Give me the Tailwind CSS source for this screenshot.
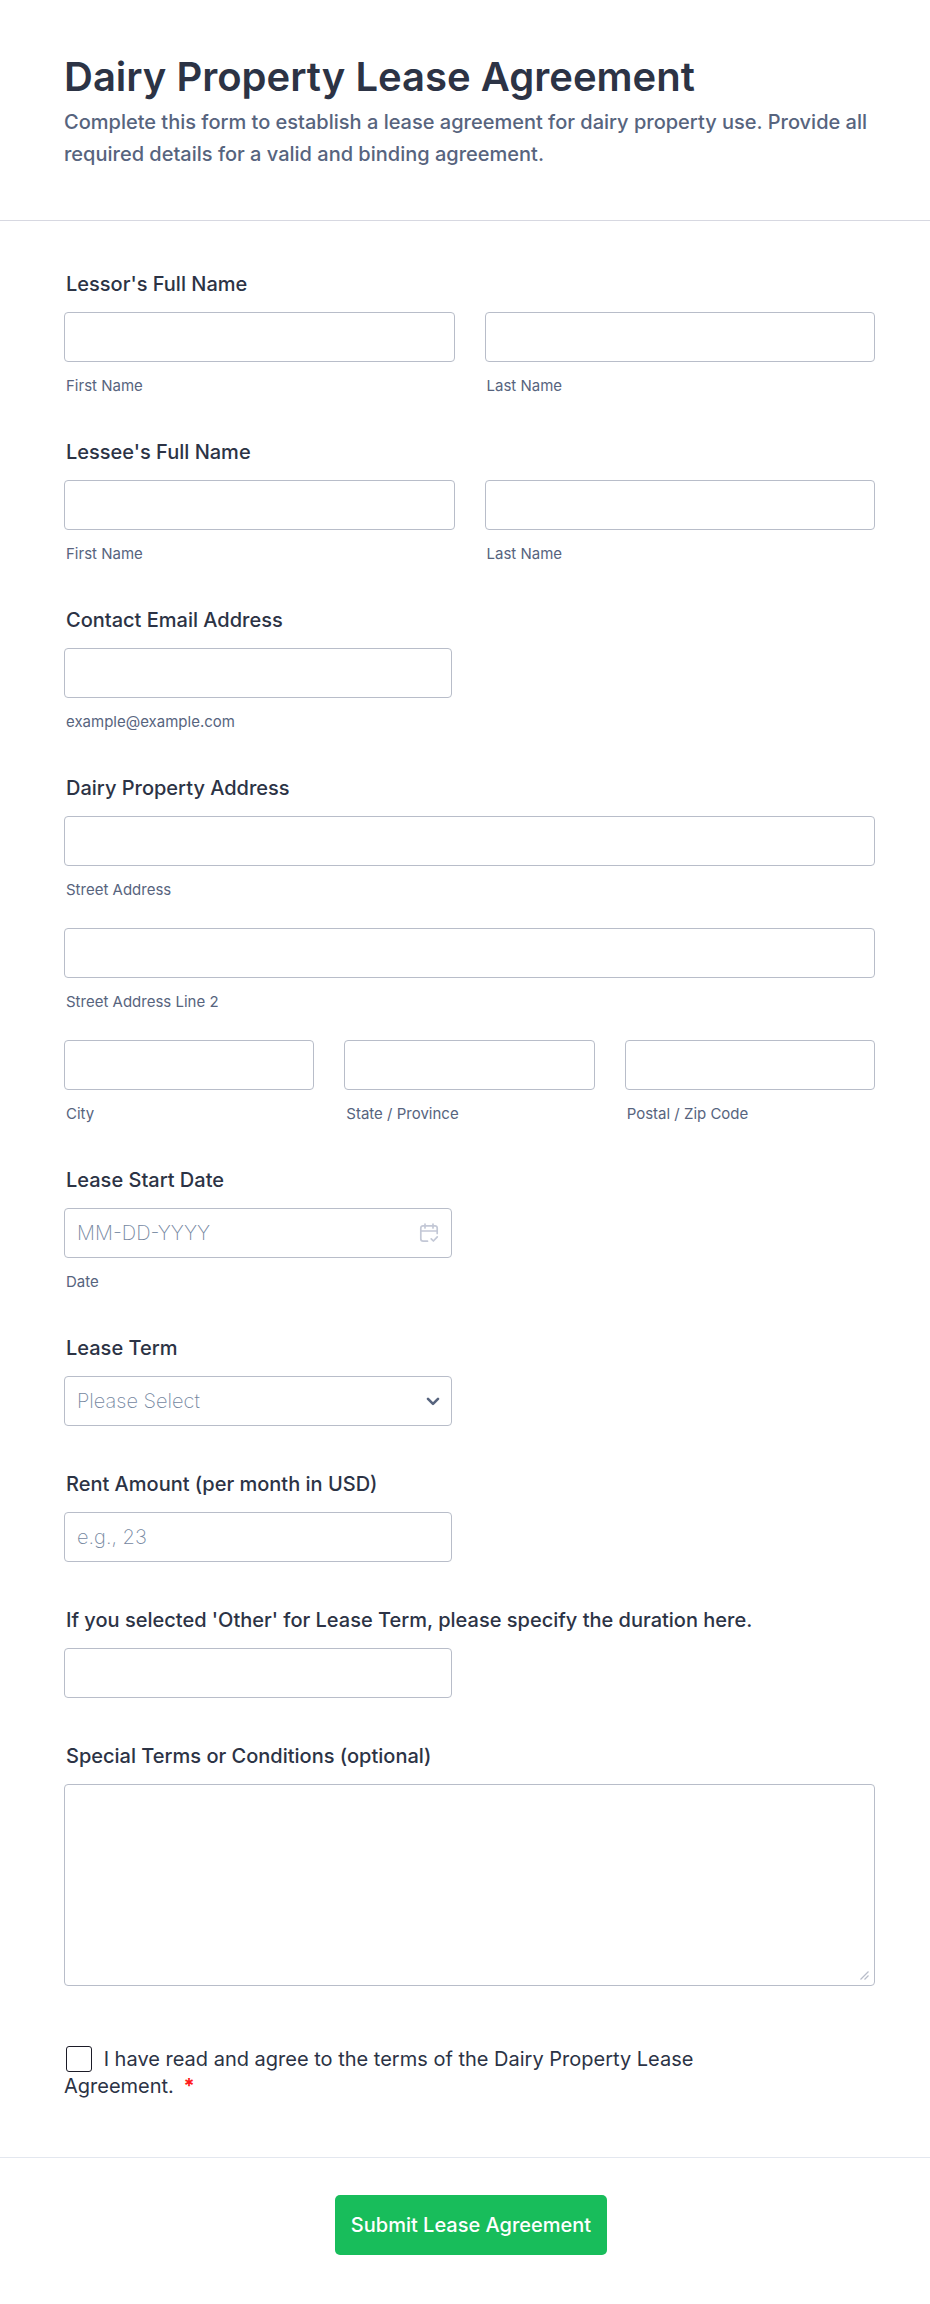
<!DOCTYPE html>
<html lang="en">
<head>
    <meta charset="UTF-8">
    <meta name="viewport" content="width=device-width, initial-scale=1.0">
    <title>Dairy Property Lease Agreement</title>
    <script src="https://cdn.jsdelivr.net/npm/@tailwindcss/browser@4"></script>
</head>
<body class="bg-white font-['Inter',sans-serif] text-[#2c3345]">
    <form>
        <header class="border-b border-[#d7d8e1] pt-13 pb-[50px] pl-16 pr-12">
            <h1 class="text-[40px] leading-[50px] font-semibold">Dairy Property Lease Agreement</h1>
            <p class="mt-1 text-xl leading-8 font-medium text-[#57647e]">Complete this form to establish a lease agreement for dairy property use. Provide all required details for a valid and binding agreement.</p>
        </header>

        <div class="flex flex-col gap-[46px] pt-[51px] pl-16 pr-[55px]">
            <fieldset>
                <legend class="mb-4 ml-[2px] text-xl leading-6 font-medium">Lessor's Full Name</legend>
                <div class="grid grid-cols-2 gap-[30px]">
                    <div>
                        <input id="lessorFirst" type="text" class="block h-[50px] w-full rounded border border-[#b8bdc9] px-3 text-xl">
                        <label for="lessorFirst" class="mt-4 ml-[2px] block text-[15px] leading-4 text-[#57647e]">First Name</label>
                    </div>
                    <div>
                        <input id="lessorLast" type="text" class="block h-[50px] w-full rounded border border-[#b8bdc9] px-3 text-xl">
                        <label for="lessorLast" class="mt-4 ml-[2px] block text-[15px] leading-4 text-[#57647e]">Last Name</label>
                    </div>
                </div>
            </fieldset>

            <fieldset>
                <legend class="mb-4 ml-[2px] text-xl leading-6 font-medium">Lessee's Full Name</legend>
                <div class="grid grid-cols-2 gap-[30px]">
                    <div>
                        <input id="lesseeFirst" type="text" class="block h-[50px] w-full rounded border border-[#b8bdc9] px-3 text-xl">
                        <label for="lesseeFirst" class="mt-4 ml-[2px] block text-[15px] leading-4 text-[#57647e]">First Name</label>
                    </div>
                    <div>
                        <input id="lesseeLast" type="text" class="block h-[50px] w-full rounded border border-[#b8bdc9] px-3 text-xl">
                        <label for="lesseeLast" class="mt-4 ml-[2px] block text-[15px] leading-4 text-[#57647e]">Last Name</label>
                    </div>
                </div>
            </fieldset>

            <div>
                <label for="email" class="mb-4 ml-[2px] block text-xl leading-6 font-medium">Contact Email Address</label>
                <input id="email" type="email" aria-describedby="emailHint" class="block h-[50px] w-full max-w-[388px] rounded border border-[#b8bdc9] px-3 text-xl">
                <p id="emailHint" class="mt-4 ml-[2px] text-[15px] leading-4 text-[#57647e]">example@example.com</p>
            </div>

            <fieldset>
                <legend class="mb-4 ml-[2px] text-xl leading-6 font-medium">Dairy Property Address</legend>
                <div class="grid grid-cols-3 gap-[30px]">
                    <div class="col-span-3">
                        <input id="street" type="text" class="block h-[50px] w-full rounded border border-[#b8bdc9] px-3 text-xl">
                        <label for="street" class="mt-4 ml-[2px] block text-[15px] leading-4 text-[#57647e]">Street Address</label>
                    </div>
                    <div class="col-span-3">
                        <input id="street2" type="text" class="block h-[50px] w-full rounded border border-[#b8bdc9] px-3 text-xl">
                        <label for="street2" class="mt-4 ml-[2px] block text-[15px] leading-4 text-[#57647e]">Street Address Line 2</label>
                    </div>
                    <div>
                        <input id="city" type="text" class="block h-[50px] w-full rounded border border-[#b8bdc9] px-3 text-xl">
                        <label for="city" class="mt-4 ml-[2px] block text-[15px] leading-4 text-[#57647e]">City</label>
                    </div>
                    <div>
                        <input id="state" type="text" class="block h-[50px] w-full rounded border border-[#b8bdc9] px-3 text-xl">
                        <label for="state" class="mt-4 ml-[2px] block text-[15px] leading-4 text-[#57647e]">State / Province</label>
                    </div>
                    <div>
                        <input id="zip" type="text" class="block h-[50px] w-full rounded border border-[#b8bdc9] px-3 text-xl">
                        <label for="zip" class="mt-4 ml-[2px] block text-[15px] leading-4 text-[#57647e]">Postal / Zip Code</label>
                    </div>
                </div>
            </fieldset>

            <div>
                <label for="startDate" class="mb-4 ml-[2px] block text-xl leading-6 font-medium">Lease Start Date</label>
                <div class="relative max-w-[388px]">
                    <input id="startDate" type="text" placeholder="MM-DD-YYYY" aria-describedby="dateHint" class="block h-[50px] w-full rounded border border-[#b8bdc9] pr-12 pl-3 text-xl font-extralight placeholder:text-[#75879f]">
                    <button type="button" aria-label="Choose date" class="absolute inset-y-0 right-3 flex items-center text-[#c3c8d6]">
                        <svg width="22" height="22" viewBox="0 0 22 22" fill="none" stroke="currentColor" stroke-width="1.7" stroke-linecap="round" stroke-linejoin="round">
                            <path d="M9.5 19.2H5.2a2.4 2.4 0 0 1-2.4-2.4V6a2.2 2.2 0 0 1 2.2-2.2h12A2.2 2.2 0 0 1 19.2 6v5.5M2.8 9h16.4M7 2v4M15 2v4M13.2 16.8l2.2 2.2 3.9-4.2"/>
                        </svg>
                    </button>
                </div>
                <p id="dateHint" class="mt-4 ml-[2px] text-[15px] leading-4 text-[#57647e]">Date</p>
            </div>

            <div>
                <label for="term" class="mb-4 ml-[2px] block text-xl leading-6 font-medium">Lease Term</label>
                <div class="relative max-w-[388px]">
                    <select id="term" class="block h-[50px] w-full appearance-none rounded border border-[#b8bdc9] pr-10 pl-3 text-xl font-extralight text-[#75879f]">
                        <option value="">Please Select</option>
                        <option>6 months</option>
                        <option>1 year</option>
                        <option>2 years</option>
                        <option>Other</option>
                    </select>
                    <svg class="pointer-events-none absolute top-[21px] right-3" width="14" height="9" viewBox="0 0 14 9" fill="none" stroke="#57647e" stroke-width="2.6" stroke-linecap="round" stroke-linejoin="round">
                        <path d="M2 1.8l5 5 5-5"/>
                    </svg>
                </div>
            </div>

            <div>
                <label for="rent" class="mb-4 ml-[2px] block text-xl leading-6 font-medium">Rent Amount (per month in USD)</label>
                <input id="rent" type="text" inputmode="numeric" placeholder="e.g., 23" class="block h-[50px] w-full max-w-[388px] rounded border border-[#b8bdc9] px-3 text-xl font-extralight placeholder:text-[#75879f]">
            </div>

            <div>
                <label for="otherTerm" class="mb-4 ml-[2px] block text-xl leading-6 font-medium">If you selected 'Other' for Lease Term, please specify the duration here.</label>
                <input id="otherTerm" type="text" class="block h-[50px] w-full max-w-[388px] rounded border border-[#b8bdc9] px-3 text-xl">
            </div>

            <div>
                <label for="special" class="mb-4 ml-[2px] block text-xl leading-6 font-medium">Special Terms or Conditions (optional)</label>
                <div class="relative">
                    <textarea id="special" class="block h-[202px] w-full resize-none rounded border border-[#b8bdc9] p-3 text-xl"></textarea>
                    <svg class="pointer-events-none absolute right-[6px] bottom-[6px]" width="9" height="9" viewBox="0 0 9 9" fill="none" stroke="#b8bdc9" stroke-width="1.2">
                        <path d="M.5 8.5l8-8M4.5 8.5l4-4"/>
                    </svg>
                </div>
            </div>
        </div>

        <div class="pt-[60px] pb-[57px] pl-16">
            <div class="max-w-[640px] text-xl leading-[27px]">
                <input id="agree" type="checkbox" required class="mr-[6px] ml-[2px] size-[26px] appearance-none rounded-[3px] border border-[#1c1c28] bg-white align-[-6px] checked:bg-[#18bd5b]">
                <label for="agree">I have read and agree to the terms of the Dairy Property Lease Agreement.</label>
                <span class="ml-1 font-bold text-[#ff1a1a]">*</span>
            </div>
        </div>

        <footer class="flex justify-center border-t border-[#e3e7ef] pt-[37px] pl-3 pb-12">
            <button type="submit" class="h-[60px] rounded-[5px] bg-[#18bd5b] px-4 text-xl font-medium text-white">Submit Lease Agreement</button>
        </footer>
    </form>
</body>
</html>
